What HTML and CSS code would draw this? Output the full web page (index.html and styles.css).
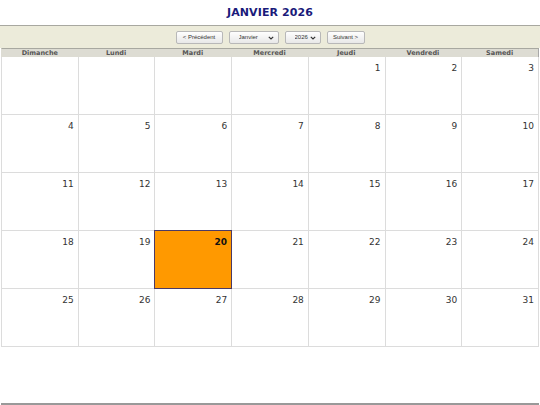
FILE: index.html
```html
<!DOCTYPE html>
<html lang="fr">
<head>
<meta charset="utf-8">
<title>Janvier 2026</title>
<link rel="stylesheet" href="styles.css">
</head>
<body>
<h1 class="title">JANVIER 2026</h1>
<div class="nav">
  <button class="btn btn-prev">&lt; Précédent</button>
  <div class="sel sel-month">
    <select><option>Janvier</option></select>
    <svg class="chev" viewBox="0 0 6 4" width="6" height="4"><path d="M0.8 0.8 L3 3 L5.2 0.8" fill="none" stroke="#333" stroke-width="1.2"/></svg>
  </div>
  <div class="sel sel-year">
    <select><option>2026</option></select>
    <svg class="chev" viewBox="0 0 6 4" width="6" height="4"><path d="M0.8 0.8 L3 3 L5.2 0.8" fill="none" stroke="#333" stroke-width="1.2"/></svg>
  </div>
  <button class="btn btn-next">Suivant &gt;</button>
</div>
<div class="cal">
  <div class="hd">Dimanche</div>
  <div class="hd">Lundi</div>
  <div class="hd">Mardi</div>
  <div class="hd">Mercredi</div>
  <div class="hd">Jeudi</div>
  <div class="hd">Vendredi</div>
  <div class="hd">Samedi</div>

  <div class="day empty"></div>
  <div class="day empty"></div>
  <div class="day empty"></div>
  <div class="day empty"></div>
  <div class="day">1</div>
  <div class="day">2</div>
  <div class="day">3</div>

  <div class="day">4</div>
  <div class="day">5</div>
  <div class="day">6</div>
  <div class="day">7</div>
  <div class="day">8</div>
  <div class="day">9</div>
  <div class="day">10</div>

  <div class="day">11</div>
  <div class="day">12</div>
  <div class="day">13</div>
  <div class="day">14</div>
  <div class="day">15</div>
  <div class="day">16</div>
  <div class="day">17</div>

  <div class="day">18</div>
  <div class="day">19</div>
  <div class="day today">20</div>
  <div class="day">21</div>
  <div class="day">22</div>
  <div class="day">23</div>
  <div class="day">24</div>

  <div class="day">25</div>
  <div class="day">26</div>
  <div class="day">27</div>
  <div class="day">28</div>
  <div class="day">29</div>
  <div class="day">30</div>
  <div class="day">31</div>
</div>
<div class="footer-line"></div>
</body>
</html>
```
FILE: styles.css
```css
html, body {
  margin: 0;
  padding: 0;
  background: #fff;
}
body {
  width: 540px;
  height: 405px;
  overflow: hidden;
  font-family: "DejaVu Sans", Verdana, sans-serif;
  position: relative;
}
.title {
  margin: 0;
  height: 25px;
  line-height: 26px;
  text-align: center;
  font-size: 11px;
  font-weight: bold;
  color: #1a1a7a;
  letter-spacing: 0.1px;
}
.nav {
  height: 23px;
  border-top: 1px solid #a8a8a0;
  background: #ecebda;
  display: flex;
  align-items: center;
  justify-content: center;
  gap: 6px;
  box-sizing: border-box;
  padding-top: 1px;
}
.btn, .sel select {
  font-family: "Liberation Sans", Arial, sans-serif;
  font-size: 6px;
  color: #333;
  height: 13px;
  box-sizing: border-box;
  border: 1px solid #b8b8b8;
  border-radius: 2px;
  background: linear-gradient(#fefefe, #e8e8e8);
  padding: 0;
  margin: 0;
  line-height: 11px;
}
.btn-prev { width: 47px; }
.btn-next { width: 38px; }
.sel {
  position: relative;
  height: 13px;
}
.sel select {
  -webkit-appearance: none;
  appearance: none;
  padding-left: 9px;
  width: 100%;
  display: block;
}
.sel-month { width: 50px; }
.sel-year { width: 36px; }
.sel-year select { padding-left: 9px; }
.chev {
  position: absolute;
  right: 5px;
  top: 5px;
}
.cal {
  display: grid;
  grid-template-columns: repeat(7, 1fr);
  margin: 0 1px;
  border-left: 1px solid #dcdcdc;
}
.hd {
  height: 8px;
  line-height: 8px;
  font-size: 6.5px;
  font-weight: bold;
  color: #555;
  text-align: center;
  background: #dddcd3;
  border-top: 1px solid #a8a8a0;
  border-right: 1px solid #a8a8a8;
  margin-left: -1px;
  border-left: 0;
}
.hd:first-child {
  border-left: 1px solid #dddcd3;
}
.day {
  height: 57px;
  border-right: 1px solid #dcdcdc;
  border-bottom: 1px solid #dcdcdc;
  text-align: right;
  font-size: 9px;
  color: #333;
  padding: 6px 4px 0 0;
  box-sizing: content-box;
  height: 51px;
}
.day.today {
  background: #ff9900;
  border: 1px solid #4b3a66;
  margin: -1px 0 0 -1px;
  font-weight: bold;
  color: #111;
  height: 51px;
}
.footer-line {
  position: absolute;
  left: 1px;
  right: 1px;
  top: 403px;
  height: 0;
  border-top: 2px solid #999;
}
```
